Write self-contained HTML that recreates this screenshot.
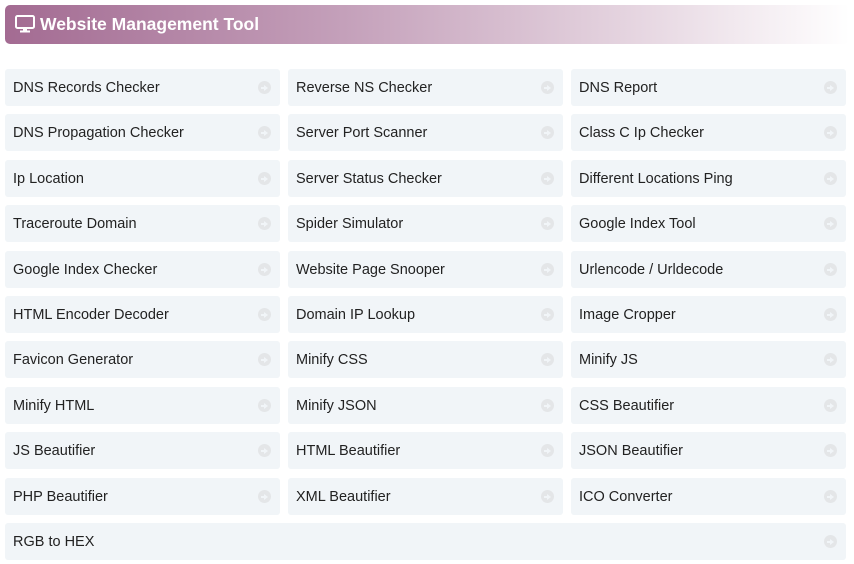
<!DOCTYPE html><html><head><style>
body{margin:0;width:854px;height:564px;background:#fff;font-family:"Liberation Sans",sans-serif;position:relative;overflow:hidden}
.h{position:absolute;left:5px;top:5px;width:845px;height:39px;border-radius:5px;background:linear-gradient(90deg,#a36b92 0%,#c4a0ba 40%,#e6d6e1 75%,#fff 100%);color:#fff;font-weight:bold;font-size:17.5px;line-height:38px}
.h span{position:absolute;left:35px;top:0}
.c{position:absolute;height:37px;background:#f1f5f8;border-radius:3px;font-size:14.5px;color:#222;line-height:38px;box-sizing:border-box;padding-left:8px}
.c i{position:absolute;right:9px;top:12px;width:13px;height:13px;border-radius:50%;background:#e4e6e8}
.c i:after{content:"";position:absolute;left:3px;top:5.5px;width:5px;height:2px;background:#f1f5f8}
.c i:before{content:"";position:absolute;left:6px;top:3.5px;border-left:4px solid #f1f5f8;border-top:3px solid transparent;border-bottom:3px solid transparent}
</style></head><body>
<div class="h"><svg style="position:absolute;left:10px;top:10px" width="20" height="18" viewBox="0 0 20 18"><rect x="1" y="1" width="18" height="12" rx="1.5" fill="none" stroke="#fff" stroke-width="2"/><rect x="8" y="13" width="4" height="3" fill="#fff"/><rect x="5" y="15.5" width="10" height="2" fill="#fff"/></svg><span>Website Management Tool</span></div>
<div id="g"></div>
<script>
var t=["DNS Records Checker","Reverse NS Checker","DNS Report","DNS Propagation Checker","Server Port Scanner","Class C Ip Checker","Ip Location","Server Status Checker","Different Locations Ping","Traceroute Domain","Spider Simulator","Google Index Tool","Google Index Checker","Website Page Snooper","Urlencode / Urldecode","HTML Encoder Decoder","Domain IP Lookup","Image Cropper","Favicon Generator","Minify CSS","Minify JS","Minify HTML","Minify JSON","CSS Beautifier","JS Beautifier","HTML Beautifier","JSON Beautifier","PHP Beautifier","XML Beautifier","ICO Converter"];
var ys=[69,114,160,205,251,296,341,387,432,478,523],xs=[5,288,571],h="";
t.forEach(function(s,i){h+='<div class="c" style="left:'+xs[i%3]+'px;top:'+ys[Math.floor(i/3)]+'px;width:275px">'+s+'<i></i></div>'});
h+='<div class="c" style="left:5px;top:523px;width:841px">RGB to HEX<i></i></div>';
document.getElementById("g").innerHTML=h;
</script>
</body></html>
